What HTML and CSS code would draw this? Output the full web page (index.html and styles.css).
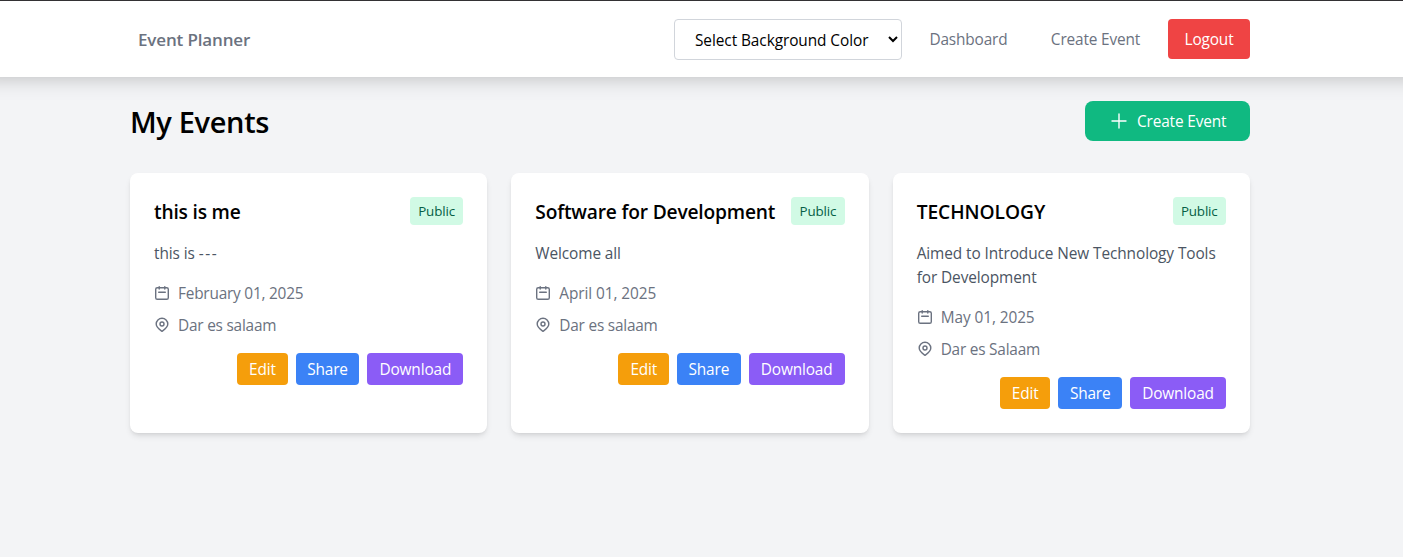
FILE: index.html
```html
<!DOCTYPE html>
<html lang="en">
<head>
<meta charset="utf-8">
<title>Event Planner</title>
<link rel="stylesheet" href="styles.css">
</head>
<body>
<svg class="defs" width="0" height="0">
  <symbol id="calendar" viewBox="0 0 16 16" fill="none" stroke="currentColor" stroke-width="1.4" stroke-linecap="round" stroke-linejoin="round">
    <rect x="1.7" y="2.7" width="12.6" height="11.600" rx="1.6"/><path d="M5.2 1.600v2.400M10.8 1.600v2.400M4.700 7.200h6.600"/>
  </symbol>
  <symbol id="pin" viewBox="0 0 16 16" fill="none" stroke="currentColor" stroke-width="1.4" stroke-linecap="round" stroke-linejoin="round">
    <path d="M8 14.4C6.400 13.200 2.200 10.700 2.200 7.100a5.800 5.800 0 0 1 11.600 0C13.800 10.700 9.600 13.200 8 14.400Z"/><circle cx="8" cy="7" r="2"/>
  </symbol>
</svg>
<header class="header">
  <nav class="nav">
    <a class="brand">Event Planner</a>
    <div class="menu">
      <select class="picker"><option>Select Background Color</option></select>
      <a class="link link-dash">Dashboard</a>
      <a class="link link-create">Create Event</a>
      <button class="logout">Logout</button>
    </div>
  </nav>
</header>
<main class="main">
  <div class="top">
    <h1 class="heading">My Events</h1>
    <button class="create">
      <svg class="plus" viewBox="0 0 20 20" fill="none" stroke="currentColor" stroke-width="1.4" stroke-linecap="round"><path d="M10 3v14M3 10h14"/></svg>
      <span class="create-label">Create Event</span>
    </button>
  </div>
  <section class="cards">
    <article class="card">
      <div class="card-head"><h2 class="title">this is me</h2><span class="badge">Public</span></div>
      <p class="text">this is <span class="dashes">---</span></p>
      <div class="meta"><svg class="icon"><use href="#calendar"/></svg><span class="label">February 01, 2025</span></div>
      <div class="meta"><svg class="icon"><use href="#pin"/></svg><span class="label">Dar es salaam</span></div>
      <div class="actions"><button class="btn edit">Edit</button><button class="btn share">Share</button><button class="btn download">Download</button></div>
    </article>
    <article class="card">
      <div class="card-head"><h2 class="title">Software for Development</h2><span class="badge">Public</span></div>
      <p class="text">Welcome all</p>
      <div class="meta"><svg class="icon"><use href="#calendar"/></svg><span class="label label-wide">April 01, 2025</span></div>
      <div class="meta"><svg class="icon"><use href="#pin"/></svg><span class="label">Dar es salaam</span></div>
      <div class="actions"><button class="btn edit">Edit</button><button class="btn share">Share</button><button class="btn download">Download</button></div>
    </article>
    <article class="card">
      <div class="card-head"><h2 class="title title-caps">TECHNOLOGY</h2><span class="badge">Public</span></div>
      <p class="text">Aimed to Introduce New Technology Tools<br>for Development</p>
      <div class="meta"><svg class="icon"><use href="#calendar"/></svg><span class="label label-wide">May 01, 2025</span></div>
      <div class="meta"><svg class="icon"><use href="#pin"/></svg><span class="label">Dar es Salaam</span></div>
      <div class="actions"><button class="btn edit">Edit</button><button class="btn share">Share</button><button class="btn download">Download</button></div>
    </article>
  </section>
</main>
</body>
</html>
```
FILE: styles.css
```css
* { box-sizing: border-box; margin: 0; padding: 0; }
body {
  min-height: 557px;
  background: #f3f4f6;
  border-top: 1px solid #333134;
  font: 15.4px/24px "Open Sans", "Noto Sans", sans-serif;
  letter-spacing: -0.15px;
  color: #000;
}
button, select { font: inherit; letter-spacing: inherit; border: 0; white-space: nowrap; }
.defs { display: block; position: absolute; }
.header {
  height: 76px;
  background: #fff;
  box-shadow: 0 -20px 20px 20px rgba(0, 0, 0, .25);
  clip-path: inset(0 0 -50px 0);
}
.nav {
  width: 1120px;
  height: 76px;
  margin-left: 130px;
  display: flex;
  align-items: center;
  justify-content: space-between;
}
.brand { padding: 2px 8px 0; font-size: 17px; font-weight: 600; color: #6b7280; white-space: nowrap; }
.menu { display: flex; align-items: center; gap: 12px; }
.picker {
  width: 228px;
  height: 41px;
  padding: 3px 0 0 16px;
  border: 1px solid #d1d5db;
  border-radius: 4px;
  background: #fff;
  color: #000;
  letter-spacing: -0.07px;
}
.link { padding-top: 2px; text-align: center; color: #6b7280; white-space: nowrap; }
.link-dash { width: 109px; }
.link-create { width: 121px; }
.logout { width: 82px; height: 40px; padding-top: 2px; border-radius: 4px; background: #ef4444; color: #fff; }
.main { width: 1120px; margin: 24px 0 0 130px; }
.top { height: 40px; margin-bottom: 32px; display: flex; align-items: center; justify-content: space-between; }
.heading { padding-top: 1px; font-size: 29px; line-height: 36px; font-weight: 600; letter-spacing: -0.35px; }
.create {
  width: 165px;
  height: 40px;
  padding-left: 24px;
  display: flex;
  align-items: center;
  gap: 8px;
  border-radius: 8px;
  background: #10b981;
  color: #fff;
}
.create-label { padding-top: 2px; }
.plus { width: 20px; height: 20px; }
.cards { display: grid; grid-template-columns: repeat(3, 1fr); gap: 24px; }
.card {
  height: 260px;
  padding: 24px;
  border-radius: 8px;
  background: #fff;
  box-shadow: 0 4px 6px -1px rgba(0, 0, 0, .1), 0 2px 4px -2px rgba(0, 0, 0, .1);
}
.card-head { display: flex; justify-content: space-between; margin-bottom: 17px; }
.title { padding-top: 1px; font-size: 19.2px; line-height: 28px; height: 28px; font-weight: 600; letter-spacing: -0.19px; white-space: nowrap; }
.title-caps { letter-spacing: -0.05px; }
.badge {
  width: 53.5px;
  height: 28px;
  border-radius: 4px;
  background: #d1fae5;
  color: #065f46;
  font-size: 13.4px;
  line-height: 28px;
  text-align: center;
}
.text { margin-bottom: 15px; color: #4b5563; letter-spacing: -0.09px; white-space: nowrap; }
.dashes { letter-spacing: 1.6px; }
.meta { height: 24px; margin-bottom: 8px; display: flex; align-items: center; gap: 8px; color: #6b7280; }
.label { padding-top: 2px; letter-spacing: -0.22px; }
.label-wide { letter-spacing: -0.08px; }
.icon { width: 16px; height: 16px; }
.actions { margin-top: 16px; display: flex; justify-content: flex-end; gap: 8px; }
.btn { height: 32px; padding-top: 2px; border-radius: 4px; color: #fff; }
.edit { width: 50.6px; background: #f59e0b; }
.share { width: 63.6px; background: #3b82f6; }
.download { width: 96px; background: #8b5cf6; }
```
